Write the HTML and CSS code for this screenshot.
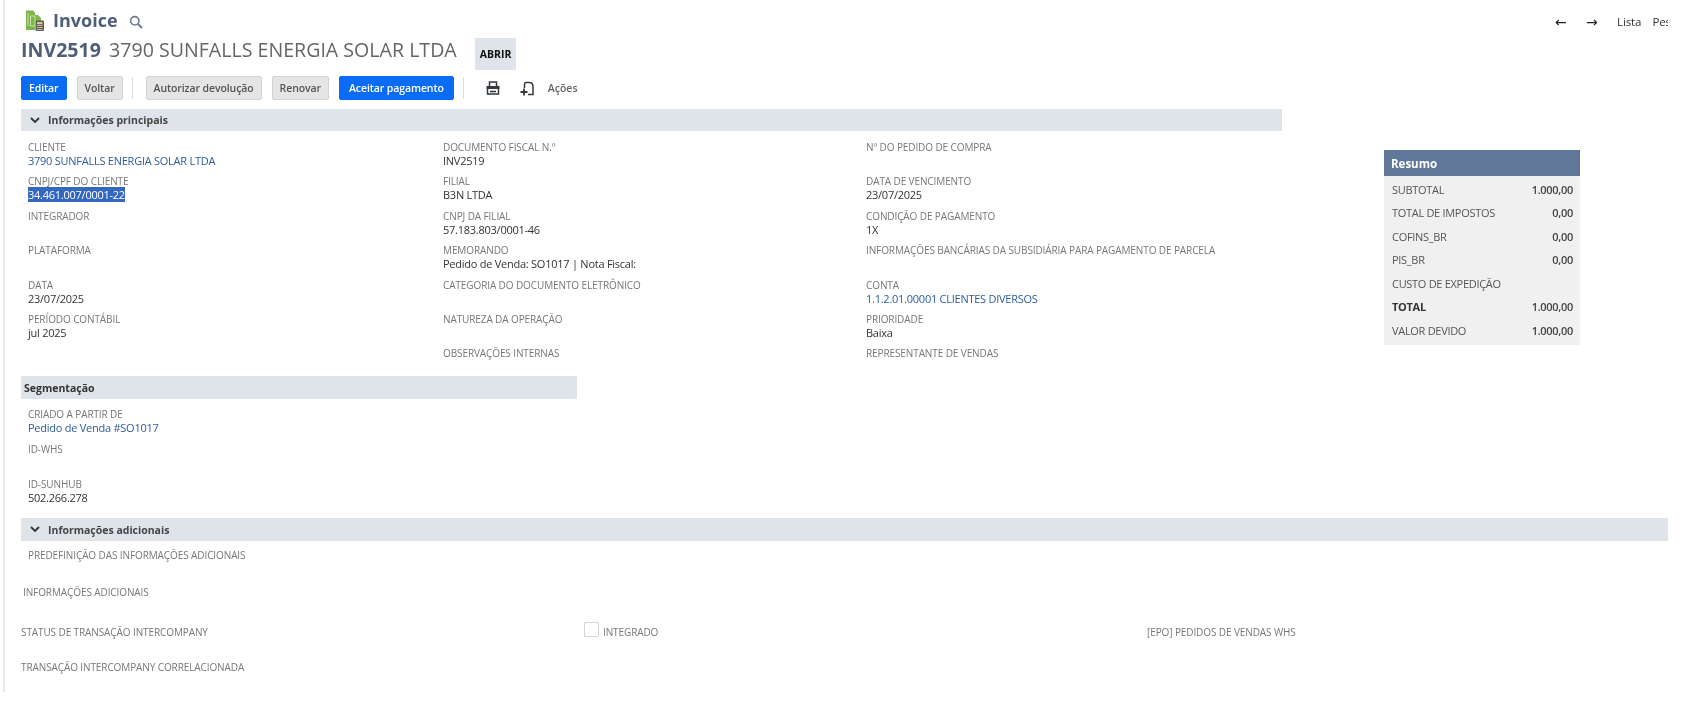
FILE: index.html
```html
<!DOCTYPE html>
<html lang="pt-BR">
<head>
<meta charset="utf-8">
<title>Invoice INV2519</title>
<link rel="stylesheet" href="styles.css">
</head>
<body>
<div class="page">
  <header class="top">
    <div class="brand">
      <svg class="brand-icon" viewBox="0 0 20 21" width="20" height="21">
        <path d="M1 0.500h7l2 2v2.500h3l3 3v3H10v9H1z" fill="#7ab648"/>
        <path d="M3 3v13M5.500 6h4.500v10H5.500z" fill="none" stroke="#c6e2a8" stroke-width="1"/>
        <rect x="10.500" y="10.500" width="8.500" height="10.500" rx="1" fill="#5b5e60"/>
        <rect x="12" y="12" width="5.500" height="2.200" fill="#d9c98e"/>
        <path d="M12 15.500h5.500M12 17.500h5.500M12 19.500h5.500" stroke="#c9b67a" stroke-width="1"/>
      </svg>
      <span class="brand-name">Invoice</span>
      <svg class="search-icon" viewBox="0 0 14 14" width="14" height="14">
        <circle cx="5.800" cy="5.800" r="4.200" fill="none" stroke="#6b7c93" stroke-width="1.600"/>
        <path d="M9 9l4 4" stroke="#6b7c93" stroke-width="2"/>
      </svg>
    </div>
    <nav class="pager">
      <span class="arrow">&#8592;</span>
      <span class="arrow">&#8594;</span>
      <span class="pager-link">Lista</span>
      <span class="pager-link">Pesquisar</span>
    </nav>
  </header>

  <div class="title-row">
    <h1 class="title"><b>INV2519</b> 3790 SUNFALLS ENERGIA SOLAR LTDA</h1>
    <span class="badge">ABRIR</span>
  </div>

  <div class="toolbar">
    <button class="btn primary">Editar</button>
    <button class="btn">Voltar</button>
    <span class="sep"></span>
    <button class="btn">Autorizar devolução</button>
    <button class="btn">Renovar</button>
    <button class="btn primary accept">Aceitar pagamento</button>
    <span class="sep"></span>
    <svg class="tool-icon print" viewBox="0 0 14 14" width="14" height="14">
      <path d="M3.500 5V1h7v4" fill="none" stroke="#33393f" stroke-width="1.500"/>
      <path d="M0.500 5h13v3h-13z" fill="#33393f"/>
      <path d="M1.500 8v5h11V8" fill="none" stroke="#33393f" stroke-width="1.500"/>
      <path d="M4 10.500h6" stroke="#33393f" stroke-width="1.600"/>
    </svg>
    <svg class="tool-icon refund" viewBox="0 0 15 15" width="15" height="15">
      <path d="M4.500 7V3q0-1.500 1.500-1.500h3c2.500 0 4 1.500 4 4V13.500H8" fill="none" stroke="#33393f" stroke-width="1.500"/>
      <path d="M0.500 11h7M4 7.500v7" stroke="#33393f" stroke-width="1.800"/>
    </svg>
    <span class="actions">Ações</span>
  </div>

  <div class="content">
    <div class="main">
      <div class="bar">
        <svg class="chevron" viewBox="0 0 10 7" width="10" height="7"><path d="M1 1l4 4 4-4" fill="none" stroke="#333" stroke-width="1.800"/></svg>
        <span>Informações principais</span>
      </div>
      <div class="fields">
        <div class="col col-a">
          <div class="field"><div class="label">CLIENTE</div><a class="value link">3790 SUNFALLS ENERGIA SOLAR LTDA</a></div>
          <div class="field"><div class="label">CNPJ/CPF DO CLIENTE</div><div class="value"><span class="selected">34.461.007/0001-22</span></div></div>
          <div class="field"><div class="label">INTEGRADOR</div></div>
          <div class="field"><div class="label">PLATAFORMA</div></div>
          <div class="field"><div class="label">DATA</div><div class="value">23/07/2025</div></div>
          <div class="field"><div class="label">PERÍODO CONTÁBIL</div><div class="value">jul 2025</div></div>
        </div>
        <div class="col col-b">
          <div class="field"><div class="label">DOCUMENTO FISCAL N.º</div><div class="value">INV2519</div></div>
          <div class="field"><div class="label">FILIAL</div><div class="value">B3N LTDA</div></div>
          <div class="field"><div class="label">CNPJ DA FILIAL</div><div class="value">57.183.803/0001-46</div></div>
          <div class="field"><div class="label">MEMORANDO</div><div class="value">Pedido de Venda: SO1017 | Nota Fiscal:</div></div>
          <div class="field"><div class="label">CATEGORIA DO DOCUMENTO ELETRÔNICO</div></div>
          <div class="field"><div class="label">NATUREZA DA OPERAÇÃO</div></div>
          <div class="field"><div class="label">OBSERVAÇÕES INTERNAS</div></div>
        </div>
        <div class="col col-c">
          <div class="field"><div class="label">Nº DO PEDIDO DE COMPRA</div></div>
          <div class="field"><div class="label">DATA DE VENCIMENTO</div><div class="value">23/07/2025</div></div>
          <div class="field"><div class="label">CONDIÇÃO DE PAGAMENTO</div><div class="value">1X</div></div>
          <div class="field"><div class="label">INFORMAÇÕES BANCÁRIAS DA SUBSIDIÁRIA PARA PAGAMENTO DE PARCELA</div></div>
          <div class="field"><div class="label">CONTA</div><a class="value link">1.1.2.01.00001 CLIENTES DIVERSOS</a></div>
          <div class="field"><div class="label">PRIORIDADE</div><div class="value">Baixa</div></div>
          <div class="field"><div class="label">REPRESENTANTE DE VENDAS</div></div>
        </div>
      </div>
    </div>
    <aside class="summary">
      <div class="summary-head">Resumo</div>
      <div class="summary-body">
        <div class="row"><span>SUBTOTAL</span><span class="num">1.000,00</span></div>
        <div class="row"><span>TOTAL DE IMPOSTOS</span><span class="num">0,00</span></div>
        <div class="row"><span>COFINS_BR</span><span class="num">0,00</span></div>
        <div class="row"><span>PIS_BR</span><span class="num">0,00</span></div>
        <div class="row"><span>CUSTO DE EXPEDIÇÃO</span></div>
        <div class="row strong"><span>TOTAL</span><span class="num">1.000,00</span></div>
        <div class="row"><span>VALOR DEVIDO</span><span class="num">1.000,00</span></div>
      </div>
    </aside>
  </div>

  <div class="bar bar-short"><span>Segmentação</span></div>
  <div class="seg">
    <div class="field"><div class="label">CRIADO A PARTIR DE</div><a class="value link">Pedido de Venda #SO1017</a></div>
    <div class="field"><div class="label">ID-WHS</div></div>
    <div class="field"><div class="label">ID-SUNHUB</div><div class="value">502.266.278</div></div>
  </div>

  <div class="bar bar-full">
    <svg class="chevron" viewBox="0 0 10 7" width="10" height="7"><path d="M1 1l4 4 4-4" fill="none" stroke="#333" stroke-width="1.800"/></svg>
    <span>Informações adicionais</span>
  </div>
  <div class="label extra-a">PREDEFINIÇÃO DAS INFORMAÇÕES ADICIONAIS</div>
  <div class="label extra-b">INFORMAÇÕES ADICIONAIS</div>
  <div class="extra-row">
    <div class="label">STATUS DE TRANSAÇÃO INTERCOMPANY</div>
    <div class="check-wrap"><span class="check"></span><span class="label">INTEGRADO</span></div>
    <div class="label">[EPO] PEDIDOS DE VENDAS WHS</div>
  </div>
  <div class="label extra-d">TRANSAÇÃO INTERCOMPANY CORRELACIONADA</div>
</div>
</body>
</html>
```
FILE: styles.css
```css
html, body { margin: 0; padding: 0; background: #fff; }
body { font-family: "Open Sans", "Liberation Sans", sans-serif; color: #333; overflow: hidden; }

.page {
  width: 1647px;
  height: 692px;
  margin-left: 3px;
  border-left: 2px solid #e9e9e9;
  padding-left: 16px;
  overflow: hidden;
  filter: blur(0.45px);
}

.top { display: flex; justify-content: space-between; align-items: center; height: 36px; padding-top: 4px; box-sizing: border-box; padding-left: 4px; }
.brand { display: flex; align-items: center; }
.brand-icon { margin-right: 8px; }
.brand-name { font-size: 18px; font-weight: 700; color: #4d5f79; width: 76px; }
.search-icon { transform: translateY(2px); }
.pager { display: flex; align-items: center; width: 113px; overflow: hidden; white-space: nowrap; font-size: 11.500px; letter-spacing: -0.1px; color: #333; padding-top: 3px; }
.arrow { font-size: 14px; width: 31px; flex: none; color: #222; font-family: "DejaVu Sans", sans-serif; }
.pager-link { margin-right: 11px; flex: none; }

.title-row { display: flex; align-items: flex-start; height: 40px; margin-top: 2px; }
.title { margin: 0; font-size: 19.600px; line-height: 24px; font-weight: 400; color: #666; width: 454px; white-space: nowrap; }
.title b { font-weight: 700; color: #4d5f79; margin-right: 3px; }
.badge { background: #dfe4eb; color: #111; font-size: 10.500px; font-weight: 700; width: 41px; height: 32px; line-height: 32px; text-align: center; }

.toolbar { display: flex; align-items: center; height: 24px; margin-top: -2px; }
.btn { font: 600 10.500px "Open Sans", sans-serif; letter-spacing: -0.1px; height: 24px; padding: 0 7px; border-radius: 2px; border: 1px solid #d3d3d3; background: #e5e5e5; color: #555; margin-right: 10px; }
.btn.primary { background: #0a6cf5; border-color: #0a6cf5; color: #fff; }
.btn.accept { padding: 0 9px; }
.sep { width: 1px; height: 22px; background: #ddd; margin: 0 13px 0 -1px; }
.tool-icon { flex: none; }
.print { margin: 0 20px 0 9px; }
.refund { margin-right: 13px; }
.actions { font-size: 10.500px; font-weight: 600; color: #666; }

.content { display: flex; align-items: flex-start; margin-top: 9px; height: 267px; }
.main { width: 1261px; flex: none; }
.bar { display: flex; align-items: center; height: 22px; background: #dfe4eb; font-size: 10.500px; font-weight: 700; color: #444; box-sizing: border-box; }
.chevron { margin: 0 8px 0 9px; }
.bar-short { width: 556px; height: 23px; padding-left: 3px; color: #333; }
.bar-full { width: 1647px; height: 23px; }

.fields { display: flex; padding: 6px 0 0 7px; }
.col { display: flex; flex-direction: column; }
.col-a { width: 415px; }
.col-b { width: 423px; }
.field { height: 34.400px; box-sizing: border-box; padding-top: 3px; }
.seg .field { height: 35px; }
.label { font-size: 10px; line-height: 14px; letter-spacing: -0.1px; color: #777; white-space: nowrap; }
.value { display: block; font-size: 11px; line-height: 14px; letter-spacing: -0.25px; color: #333; white-space: nowrap; }
.link { color: #2d5c9e; }
.selected { background: #3367c0; color: #fff; }

.summary { width: 196px; margin: 41px 0 0 102px; flex: none; }
.summary-head { height: 26px; line-height: 27px; background: #607799; color: #fff; font-size: 11.500px; font-weight: 700; padding-left: 7px; }
.summary-body { background: #f0f0f0; height: 169px; padding: 1.500px 7px 0 8px; box-sizing: border-box; }
.row { display: flex; justify-content: space-between; height: 23.600px; line-height: 23.600px; font-size: 11px; letter-spacing: -0.3px; color: #555; }
.num { font-weight: 600; color: #444; }
.row.strong { font-weight: 700; color: #333; }

.seg { padding: 5px 0 0 7px; height: 119px; box-sizing: border-box; }

.extra-a { margin: 7px 0 0 7px; }
.extra-b { margin: 23px 0 0 2px; }
.extra-row { display: grid; grid-template-columns: 563px 563px 1fr; margin-top: 25px; align-items: center; }
.check-wrap { display: flex; align-items: center; }
.check { width: 13px; height: 13px; border: 1px solid #d5d5d5; margin-right: 4px; border-radius: 1px; transform: translateY(-2px); }
.extra-d { margin-top: 21px; }
```
